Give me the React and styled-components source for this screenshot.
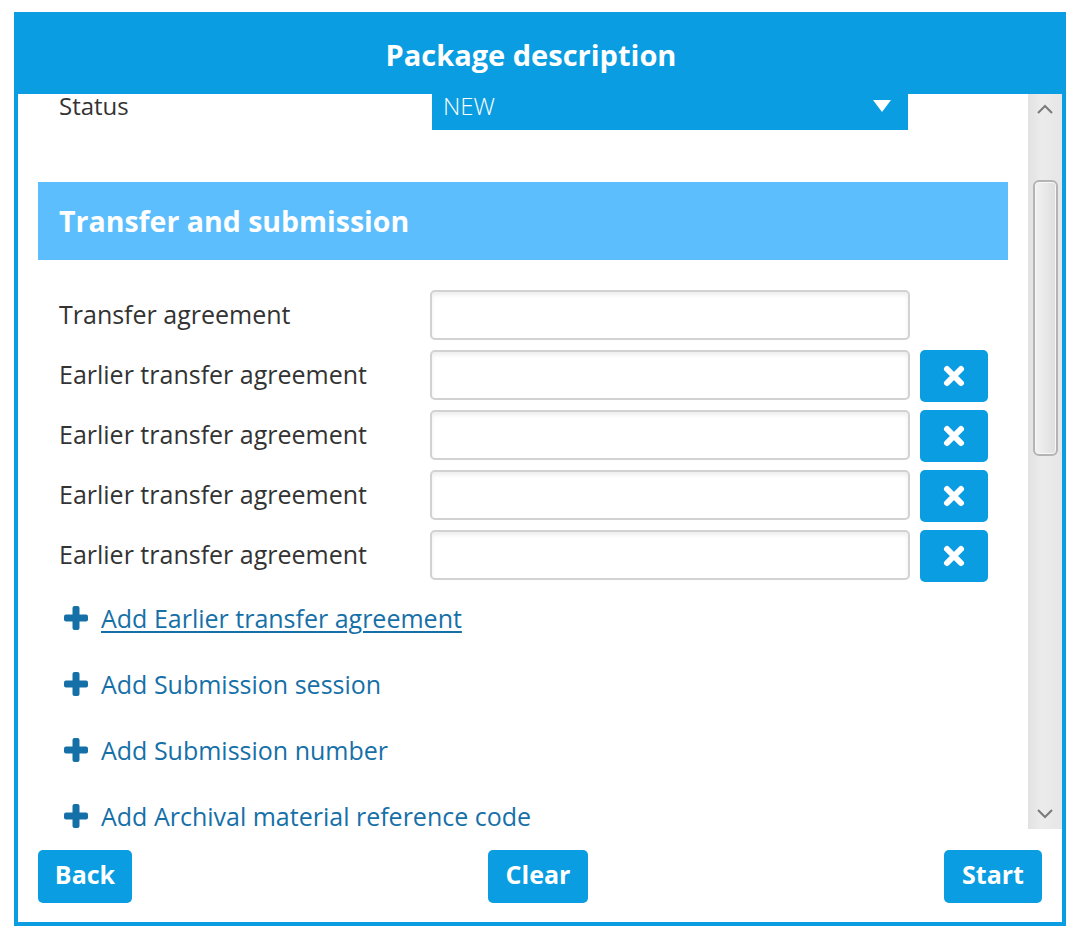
import React from "react";
import styled, { createGlobalStyle } from "styled-components";

const GlobalStyle = createGlobalStyle`
  html, body {
    margin: 0;
    padding: 0;
    background: #ffffff;
  }
  body {
    font-family: "Open Sans", Lato, sans-serif;
    color: #333333;
  }
  * {
    box-sizing: border-box;
  }
`;

const BLUE = "#0a9de1";

const Frame = styled.div`
  margin: 12px 0 0 14px;
  width: 1052px;
  height: 914px;
  border: 4px solid ${BLUE};
  display: flex;
  flex-direction: column;
  background: #fff;
`;

const Header = styled.div`
  height: 78px;
  background: ${BLUE};
  display: flex;
  align-items: center;
  justify-content: center;
  color: #fff;
  font-size: 29px;
  font-weight: 700;
  padding: 0 18px 2px 0;
`;

const Pane = styled.div`
  height: 735px;
  display: flex;
`;

const Viewport = styled.div`
  flex: 1;
  overflow: hidden;
`;

const Scrolled = styled.div`
  margin-top: ${(p) => -p.$offset}px;
  padding: 0 20px;
`;

const StatusRow = styled.div`
  height: 50px;
  display: flex;
  align-items: center;
  padding-left: 21px;
`;

const Label = styled.div`
  width: 371px;
  font-size: 24px;
  color: #333;
  white-space: nowrap;
`;

const Select = styled.div`
  margin-left: 2px;
  width: 476px;
  height: 50px;
  background: ${BLUE};
  color: #fff;
  font-size: 24px;
  font-weight: 300;
  display: flex;
  align-items: center;
  justify-content: space-between;
  padding: 0 17px 0 11px;
`;

const Caret = styled.span`
  width: 0;
  height: 0;
  border-left: 9px solid transparent;
  border-right: 9px solid transparent;
  border-top: 12px solid #fff;
  margin-top: 2px;
`;

const SectionHeader = styled.div`
  margin-top: 52px;
  height: 78px;
  background: #5cbefd;
  color: #fff;
  font-size: 28.5px;
  font-weight: 700;
  display: flex;
  align-items: center;
  padding-left: 21px;
`;

const Rows = styled.div`
  margin-top: 30px;
  padding-left: 21px;
  display: flex;
  flex-direction: column;
  gap: 10px;
`;

const Row = styled.div`
  display: grid;
  grid-template-columns: 361px 480px 68px;
  column-gap: 10px;
  align-items: start;
  height: 50px;
`;

const RowLabel = styled(Label)`
  width: auto;
  height: 50px;
  font-size: 25px;
  display: flex;
  align-items: center;
  padding-bottom: 2px;
`;

const Input = styled.input`
  width: 480px;
  height: 50px;
  border: 2px solid #d2d2d2;
  border-radius: 5px;
  box-shadow: inset 0 3px 4px rgba(0, 0, 0, 0.07);
  font-size: 22px;
  font-family: inherit;
  padding: 0 10px;
  outline: none;
  background: #fff;
`;

const RemoveButton = styled.button`
  width: 68px;
  height: 52px;
  border: none;
  border-radius: 5px;
  background: ${BLUE};
  display: flex;
  align-items: center;
  justify-content: center;
  padding: 0;
  cursor: pointer;
`;

const Links = styled.div`
  margin-top: 5px;
  padding-left: 25px;
  display: flex;
  flex-direction: column;
`;

const LinkRow = styled.a`
  height: 66px;
  display: flex;
  align-items: center;
  gap: 12px;
  color: #1670a8;
  font-size: 25px;
  text-decoration: none;
  cursor: pointer;

  span {
    text-decoration: ${(p) => (p.$hover ? "underline" : "none")};
    text-underline-offset: 3px;
    text-decoration-thickness: 2px;
  }
`;

const Scrollbar = styled.div`
  width: 34px;
  background: linear-gradient(to right, #e2e2e2, #ececec 40%, #e6e6e6);
  display: flex;
  flex-direction: column;
  align-items: center;
`;

const ArrowBox = styled.div`
  height: 30px;
  width: 100%;
  display: flex;
  align-items: center;
  justify-content: center;
`;

const Track = styled.div`
  flex: 1;
  width: 100%;
  display: flex;
  justify-content: center;
`;

const Thumb = styled.div`
  margin-top: 56px;
  width: 25px;
  height: 276px;
  border: 2px solid #b4b4b4;
  border-radius: 6px;
  background: linear-gradient(to right, #f2f2f2, #e6e6e6 60%, #dedede);
  box-shadow: inset 0 0 0 1px #f7f7f7;
`;

const Footer = styled.div`
  flex: 1;
  display: flex;
  justify-content: space-between;
  align-items: flex-start;
  padding: 21px 20px 0 20px;
`;

const Button = styled.button`
  width: ${(p) => p.$w}px;
  height: 53px;
  padding: 0 0 5px;
  border: none;
  border-radius: 5px;
  background: ${BLUE};
  color: #fff;
  font-family: "Open Sans", Lato, sans-serif;
  font-size: 25px;
  font-weight: 700;
  cursor: pointer;
`;

const PlusIcon = () => (
  <svg width="26" height="26" viewBox="0 0 26 26">
    <rect x="9.5" y="1" width="7" height="24" rx="2" fill="#1670a8" />
    <rect x="1" y="9.5" width="24" height="7" rx="2" fill="#1670a8" />
  </svg>
);

const CrossIcon = () => (
  <svg width="24" height="24" viewBox="0 0 24 24">
    <path
      d="M5 5 L19 19 M19 5 L5 19"
      stroke="#fff"
      strokeWidth="6"
      strokeLinecap="round"
    />
  </svg>
);

const Chevron = ({ up }) => (
  <svg width="18" height="10" viewBox="0 0 18 10">
    <path
      d={up ? "M2 9 L9 2 L16 9" : "M2 1 L9 8 L16 1"}
      stroke="#7a7a7a"
      strokeWidth="2"
      fill="none"
    />
  </svg>
);

const earlier = [1, 2, 3, 4];
const links = [
  "Add Earlier transfer agreement",
  "Add Submission session",
  "Add Submission number",
  "Add Archival material reference code",
];

export default function App() {
  return (
    <>
      <GlobalStyle />
      <Frame>
        <Header>Package description</Header>
        <Pane>
          <Viewport>
            <Scrolled $offset={14}>
              <StatusRow>
                <Label>Status</Label>
                <Select>
                  NEW
                  <Caret />
                </Select>
              </StatusRow>
              <SectionHeader>Transfer and submission</SectionHeader>
              <Rows>
                <Row>
                  <RowLabel>Transfer agreement</RowLabel>
                  <Input />
                </Row>
                {earlier.map((i) => (
                  <Row key={i}>
                    <RowLabel>Earlier transfer agreement</RowLabel>
                    <Input />
                    <RemoveButton>
                      <CrossIcon />
                    </RemoveButton>
                  </Row>
                ))}
              </Rows>
              <Links>
                {links.map((text, i) => (
                  <LinkRow key={text} $hover={i === 0}>
                    <PlusIcon />
                    <span>{text}</span>
                  </LinkRow>
                ))}
              </Links>
            </Scrolled>
          </Viewport>
          <Scrollbar>
            <ArrowBox>
              <Chevron up />
            </ArrowBox>
            <Track>
              <Thumb />
            </Track>
            <ArrowBox>
              <Chevron />
            </ArrowBox>
          </Scrollbar>
        </Pane>
        <Footer>
          <Button $w={94}>Back</Button>
          <Button $w={100}>Clear</Button>
          <Button $w={98}>Start</Button>
        </Footer>
      </Frame>
    </>
  );
}
